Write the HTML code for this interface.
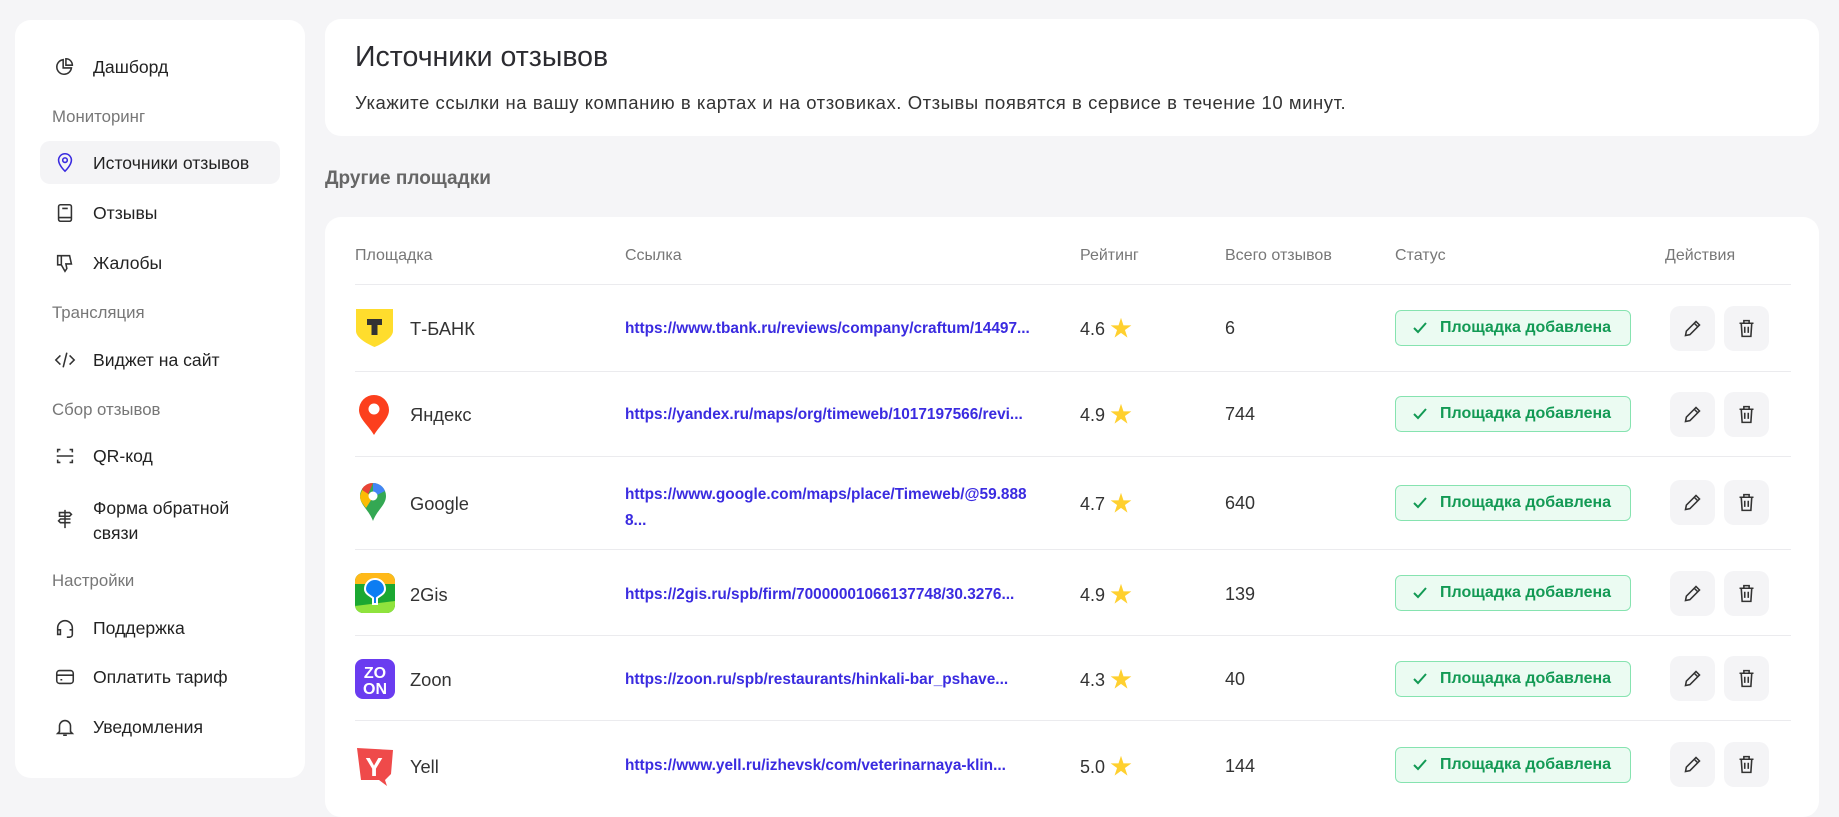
<!DOCTYPE html>
<html><head><meta charset="utf-8"><style>
*{box-sizing:border-box;margin:0;padding:0}
body{width:1839px;height:793px;overflow:hidden;background:#f5f5f7;font-family:"Liberation Sans","Noto Sans CJK SC",sans-serif;color:#2b2b30;position:relative}
.abs{position:absolute}
.card{position:absolute;background:#fff;border-radius:16px}
.nav{position:absolute;left:93px;font-size:17.6px;color:#222;line-height:22px}
.ico{position:absolute;left:54px;width:22px;height:22px}
.sec{position:absolute;left:52px;font-size:16.8px;color:#777}
.th{position:absolute;top:247px;font-size:16px;color:#777}
.line{position:absolute;left:355px;width:1436px;height:1px;background:#ebebee}
.name{position:absolute;left:410px;font-size:18.3px;color:#333}
.link{position:absolute;left:625px;font-size:15.4px;font-weight:bold;color:#3a2be0;white-space:nowrap}
.rt{position:absolute;left:1080px;font-size:18px;color:#333;line-height:22px}
.rt span{font-size:22px;vertical-align:-1px}
.tot{position:absolute;left:1225px;font-size:18px;color:#333}
.badge{position:absolute;left:1395px;width:236px;height:36px;border:1px solid #86e3b0;background:#ebfbf2;border-radius:6px;color:#139a55;font-weight:bold;font-size:16px;line-height:34px;padding-left:44px}
.badge svg{position:absolute;left:16px;top:10px}
.btn{position:absolute;width:45px;height:45px;background:#f4f4f6;border-radius:10px}
.btn svg{position:absolute;left:12px;top:12px}
</style></head><body>

<div class="card" style="left:15px;top:20px;width:290px;height:758px"></div>
<div class="abs" style="left:40px;top:141px;width:240px;height:43px;background:#f4f4f6;border-radius:10px"></div>

<svg class="ico" style="top:56px" viewBox="0 0 24 24" fill="none" stroke="#333" stroke-width="1.7"><path d="M10 4a8 8 0 1 0 9 9h-9z"/><path d="M13 3v7h7a7 7 0 0 0-7-7z"/></svg>
<div class="nav" style="top:56px">Дашборд</div>
<div class="sec" style="top:107px">Мониторинг</div>
<svg class="ico" style="top:151px" viewBox="0 0 24 24" fill="none" stroke="#3a2be0" stroke-width="1.7"><path d="M12 22s7-6.5 7-12a7 7 0 0 0-14 0c0 5.5 7 12 7 12z"/><circle cx="12" cy="10" r="2.5"/></svg>
<div class="nav" style="top:152px">Источники отзывов</div>
<svg class="ico" style="top:202px" viewBox="0 0 24 24" fill="none" stroke="#333" stroke-width="1.7"><rect x="5" y="3" width="14" height="18" rx="2"/><path d="M5 17h14M9 7h6"/></svg>
<div class="nav" style="top:202px">Отзывы</div>
<svg class="ico" style="top:252px" viewBox="0 0 24 24" fill="none" stroke="#333" stroke-width="1.7"><path d="M4 4h4v10H4zM8 4h9l2 9h-6l1 5-2 3-4-7"/></svg>
<div class="nav" style="top:252px">Жалобы</div>
<div class="sec" style="top:303px">Трансляция</div>
<svg class="ico" style="top:349px" viewBox="0 0 24 24" fill="none" stroke="#333" stroke-width="1.7"><path d="M7 7l-5 5 5 5M17 7l5 5-5 5M14 4l-4 16"/></svg>
<div class="nav" style="top:349px">Виджет на сайт</div>
<div class="sec" style="top:400px">Сбор отзывов</div>
<svg class="ico" style="top:445px" viewBox="0 0 24 24" fill="none" stroke="#333" stroke-width="1.7"><path d="M4 8V5h3M17 5h3v3M4 16v3h3M17 19h3v-3M3 12h18"/></svg>
<div class="nav" style="top:445px">QR-код</div>
<svg class="ico" style="top:508px" viewBox="0 0 24 24" fill="none" stroke="#333" stroke-width="1.7"><path d="M12 2v20M6 5h11l2 2-2 2H6zM18 12H7l-2 2 2 2h11"/></svg>
<div class="nav" style="top:496px;line-height:25px">Форма обратной<br>связи</div>
<div class="sec" style="top:571px">Настройки</div>
<svg class="ico" style="top:617px" viewBox="0 0 24 24" fill="none" stroke="#333" stroke-width="1.7"><path d="M4 15v-3a8 8 0 0 1 16 0v3M4 14h3v5H4zM17 14h3v5a3 3 0 0 1-3 3h-3"/></svg>
<div class="nav" style="top:617px">Поддержка</div>
<svg class="ico" style="top:666px" viewBox="0 0 24 24" fill="none" stroke="#333" stroke-width="1.7"><rect x="3" y="5" width="18" height="14" rx="3"/><path d="M3 10h18M7 15h2"/></svg>
<div class="nav" style="top:666px">Оплатить тариф</div>
<svg class="ico" style="top:716px" viewBox="0 0 24 24" fill="none" stroke="#333" stroke-width="1.7"><path d="M6 17V11a6 6 0 0 1 12 0v6l2 2H4zM10 21h4"/></svg>
<div class="nav" style="top:716px">Уведомления</div>

<div class="card" style="left:325px;top:19px;width:1494px;height:117px"></div>
<div class="abs" style="left:355px;top:41px;font-size:28.5px;color:#2b2b30">Источники отзывов</div>
<div class="abs" style="left:355px;top:92px;font-size:18.5px;letter-spacing:0.55px;color:#333;white-space:nowrap">Укажите ссылки на вашу компанию в картах и на отзовиках. Отзывы появятся в сервисе в течение 10 минут.</div>
<div class="abs" style="left:325px;top:168px;font-size:19px;font-weight:bold;color:#666">Другие площадки</div>

<div class="card" style="left:325px;top:217px;width:1494px;height:600px"></div>
<div class="th" style="left:355px">Площадка</div>
<div class="th" style="left:625px">Ссылка</div>
<div class="th" style="left:1080px">Рейтинг</div>
<div class="th" style="left:1225px">Всего отзывов</div>
<div class="th" style="left:1395px">Статус</div>
<div class="th" style="left:1665px">Действия</div>
<div class="line" style="top:284px"></div>
<div class="line" style="top:371px"></div>
<div class="line" style="top:456px"></div>
<div class="line" style="top:549px"></div>
<div class="line" style="top:635px"></div>
<div class="line" style="top:720px"></div>

<svg class="abs" style="left:356px;top:309px" width="37" height="38" viewBox="0 0 37 38"><path d="M0 0h37v22c0 6-9 12-18.5 16C9 34 0 28 0 22z" fill="#ffdd2d"/><path d="M11 10h15v6h-4.5v10h-6V16H11z" fill="#333"/></svg>
<svg class="abs" style="left:358px;top:395px" width="32" height="40" viewBox="0 0 32 40"><path d="M16 0a15 15 0 0 1 15 15c0 9-10 16-15 25C11 31 1 24 1 15A15 15 0 0 1 16 0z" fill="#fc3f1d"/><circle cx="16" cy="14" r="5.5" fill="#fff"/></svg>
<svg class="abs" style="left:359px;top:483px" width="28" height="38" viewBox="0 0 28 38"><path d="M14 0A13 13 0 0 1 27 13c0 9-9 14-13 25C10 27 1 22 1 13A13 13 0 0 1 14 0z" fill="#34a853"/><path d="M3 6A13 13 0 0 1 14 0l-6 14z" fill="#ea4335"/><path d="M14 0a13 13 0 0 1 12 8l-12 6z" fill="#4285f4"/><path d="M1 13c0 5 3 8 6 12l7-11L3 7z" fill="#fbbc04"/><circle cx="14" cy="13" r="4.5" fill="#fff"/></svg>
<svg class="abs" style="left:355px;top:573px" width="40" height="40" viewBox="0 0 40 40"><rect width="40" height="40" rx="8" fill="#1ba831"/><path d="M0 8a8 8 0 0 1 8-8h24a8 8 0 0 1 8 8v3H0z" fill="#ffb919"/><path d="M0 33l40-5v4a8 8 0 0 1-8 8H8a8 8 0 0 1-8-8z" fill="#8fe33d"/><path d="M20 6a10 10 0 0 1 10 10c0 5-6 7-8 9v6h-4v-6c-2-2-8-4-8-9A10 10 0 0 1 20 6z" fill="#0d7df2" stroke="#fff" stroke-width="2"/></svg>
<svg class="abs" style="left:355px;top:659px" width="40" height="40" viewBox="0 0 40 40"><rect width="40" height="40" rx="8" fill="#6a3cf0"/><text x="20" y="19" text-anchor="middle" font-family="Liberation Sans" font-weight="bold" font-size="16" fill="#fff">ZO</text><text x="20" y="35" text-anchor="middle" font-family="Liberation Sans" font-weight="bold" font-size="16" fill="#fff">ON</text></svg>
<svg class="abs" style="left:355px;top:746px" width="40" height="40" viewBox="0 0 40 40"><path d="M2 2l36 2-2 24-6 6 2 6-8-6H6z" fill="#ef4a4a"/><text x="19" y="30" text-anchor="middle" font-family="Liberation Sans" font-weight="bold" font-size="26" fill="#fff">Y</text></svg>

<div class="name" style="top:318px">Т-БАНК</div>
<div class="name" style="top:404px">Яндекс</div>
<div class="name" style="top:493px">Google</div>
<div class="name" style="top:584px">2Gis</div>
<div class="name" style="top:669px">Zoon</div>
<div class="name" style="top:756px">Yell</div>

<div class="link" style="top:320px">https://www.tbank.ru/reviews/company/craftum/14497...</div>
<div class="link" style="top:406px">https://yandex.ru/maps/org/timeweb/1017197566/revi...</div>
<div class="link" style="top:482px;line-height:26px">https://www.google.com/maps/place/Timeweb/@59.888<br>8...</div>
<div class="link" style="top:586px">https://2gis.ru/spb/firm/70000001066137748/30.3276...</div>
<div class="link" style="top:671px">https://zoon.ru/spb/restaurants/hinkali-bar_pshave...</div>
<div class="link" style="top:757px">https://www.yell.ru/izhevsk/com/veterinarnaya-klin...</div>

<div class="rt" style="top:318px">4.6 <span style="color:#ffd02f">★</span></div>
<div class="rt" style="top:404px">4.9 <span style="color:#ffd02f">★</span></div>
<div class="rt" style="top:493px">4.7 <span style="color:#ffd02f">★</span></div>
<div class="rt" style="top:584px">4.9 <span style="color:#ffd02f">★</span></div>
<div class="rt" style="top:669px">4.3 <span style="color:#ffd02f">★</span></div>
<div class="rt" style="top:756px">5.0 <span style="color:#ffd02f">★</span></div>

<div class="tot" style="top:318px">6</div>
<div class="tot" style="top:404px">744</div>
<div class="tot" style="top:493px">640</div>
<div class="tot" style="top:584px">139</div>
<div class="tot" style="top:669px">40</div>
<div class="tot" style="top:756px">144</div>

<div class="badge" style="top:310px"><svg width="16" height="14" viewBox="0 0 16 14" fill="none" stroke="#139a55" stroke-width="2"><path d="M2 7l4 4 8-9"/></svg>Площадка добавлена</div>
<div class="badge" style="top:396px"><svg width="16" height="14" viewBox="0 0 16 14" fill="none" stroke="#139a55" stroke-width="2"><path d="M2 7l4 4 8-9"/></svg>Площадка добавлена</div>
<div class="badge" style="top:485px"><svg width="16" height="14" viewBox="0 0 16 14" fill="none" stroke="#139a55" stroke-width="2"><path d="M2 7l4 4 8-9"/></svg>Площадка добавлена</div>
<div class="badge" style="top:575px"><svg width="16" height="14" viewBox="0 0 16 14" fill="none" stroke="#139a55" stroke-width="2"><path d="M2 7l4 4 8-9"/></svg>Площадка добавлена</div>
<div class="badge" style="top:661px"><svg width="16" height="14" viewBox="0 0 16 14" fill="none" stroke="#139a55" stroke-width="2"><path d="M2 7l4 4 8-9"/></svg>Площадка добавлена</div>
<div class="badge" style="top:747px"><svg width="16" height="14" viewBox="0 0 16 14" fill="none" stroke="#139a55" stroke-width="2"><path d="M2 7l4 4 8-9"/></svg>Площадка добавлена</div>

<div class="btn" style="left:1670px;top:306px"><svg width="21" height="21" viewBox="0 0 24 24" fill="none" stroke="#333" stroke-width="1.8"><path d="M4 20l1-5L16 4l4 4L9 19z M14 6l4 4"/></svg></div>
<div class="btn" style="left:1724px;top:306px"><svg width="21" height="21" viewBox="0 0 24 24" fill="none" stroke="#333" stroke-width="1.8"><path d="M4 6h16M9 6V3h6v3M6 6l1 15h10l1-15M10 10v7M14 10v7"/></svg></div>
<div class="btn" style="left:1670px;top:392px"><svg width="21" height="21" viewBox="0 0 24 24" fill="none" stroke="#333" stroke-width="1.8"><path d="M4 20l1-5L16 4l4 4L9 19z M14 6l4 4"/></svg></div>
<div class="btn" style="left:1724px;top:392px"><svg width="21" height="21" viewBox="0 0 24 24" fill="none" stroke="#333" stroke-width="1.8"><path d="M4 6h16M9 6V3h6v3M6 6l1 15h10l1-15M10 10v7M14 10v7"/></svg></div>
<div class="btn" style="left:1670px;top:480px"><svg width="21" height="21" viewBox="0 0 24 24" fill="none" stroke="#333" stroke-width="1.8"><path d="M4 20l1-5L16 4l4 4L9 19z M14 6l4 4"/></svg></div>
<div class="btn" style="left:1724px;top:480px"><svg width="21" height="21" viewBox="0 0 24 24" fill="none" stroke="#333" stroke-width="1.8"><path d="M4 6h16M9 6V3h6v3M6 6l1 15h10l1-15M10 10v7M14 10v7"/></svg></div>
<div class="btn" style="left:1670px;top:571px"><svg width="21" height="21" viewBox="0 0 24 24" fill="none" stroke="#333" stroke-width="1.8"><path d="M4 20l1-5L16 4l4 4L9 19z M14 6l4 4"/></svg></div>
<div class="btn" style="left:1724px;top:571px"><svg width="21" height="21" viewBox="0 0 24 24" fill="none" stroke="#333" stroke-width="1.8"><path d="M4 6h16M9 6V3h6v3M6 6l1 15h10l1-15M10 10v7M14 10v7"/></svg></div>
<div class="btn" style="left:1670px;top:656px"><svg width="21" height="21" viewBox="0 0 24 24" fill="none" stroke="#333" stroke-width="1.8"><path d="M4 20l1-5L16 4l4 4L9 19z M14 6l4 4"/></svg></div>
<div class="btn" style="left:1724px;top:656px"><svg width="21" height="21" viewBox="0 0 24 24" fill="none" stroke="#333" stroke-width="1.8"><path d="M4 6h16M9 6V3h6v3M6 6l1 15h10l1-15M10 10v7M14 10v7"/></svg></div>
<div class="btn" style="left:1670px;top:742px"><svg width="21" height="21" viewBox="0 0 24 24" fill="none" stroke="#333" stroke-width="1.8"><path d="M4 20l1-5L16 4l4 4L9 19z M14 6l4 4"/></svg></div>
<div class="btn" style="left:1724px;top:742px"><svg width="21" height="21" viewBox="0 0 24 24" fill="none" stroke="#333" stroke-width="1.8"><path d="M4 6h16M9 6V3h6v3M6 6l1 15h10l1-15M10 10v7M14 10v7"/></svg></div>

</body></html>
